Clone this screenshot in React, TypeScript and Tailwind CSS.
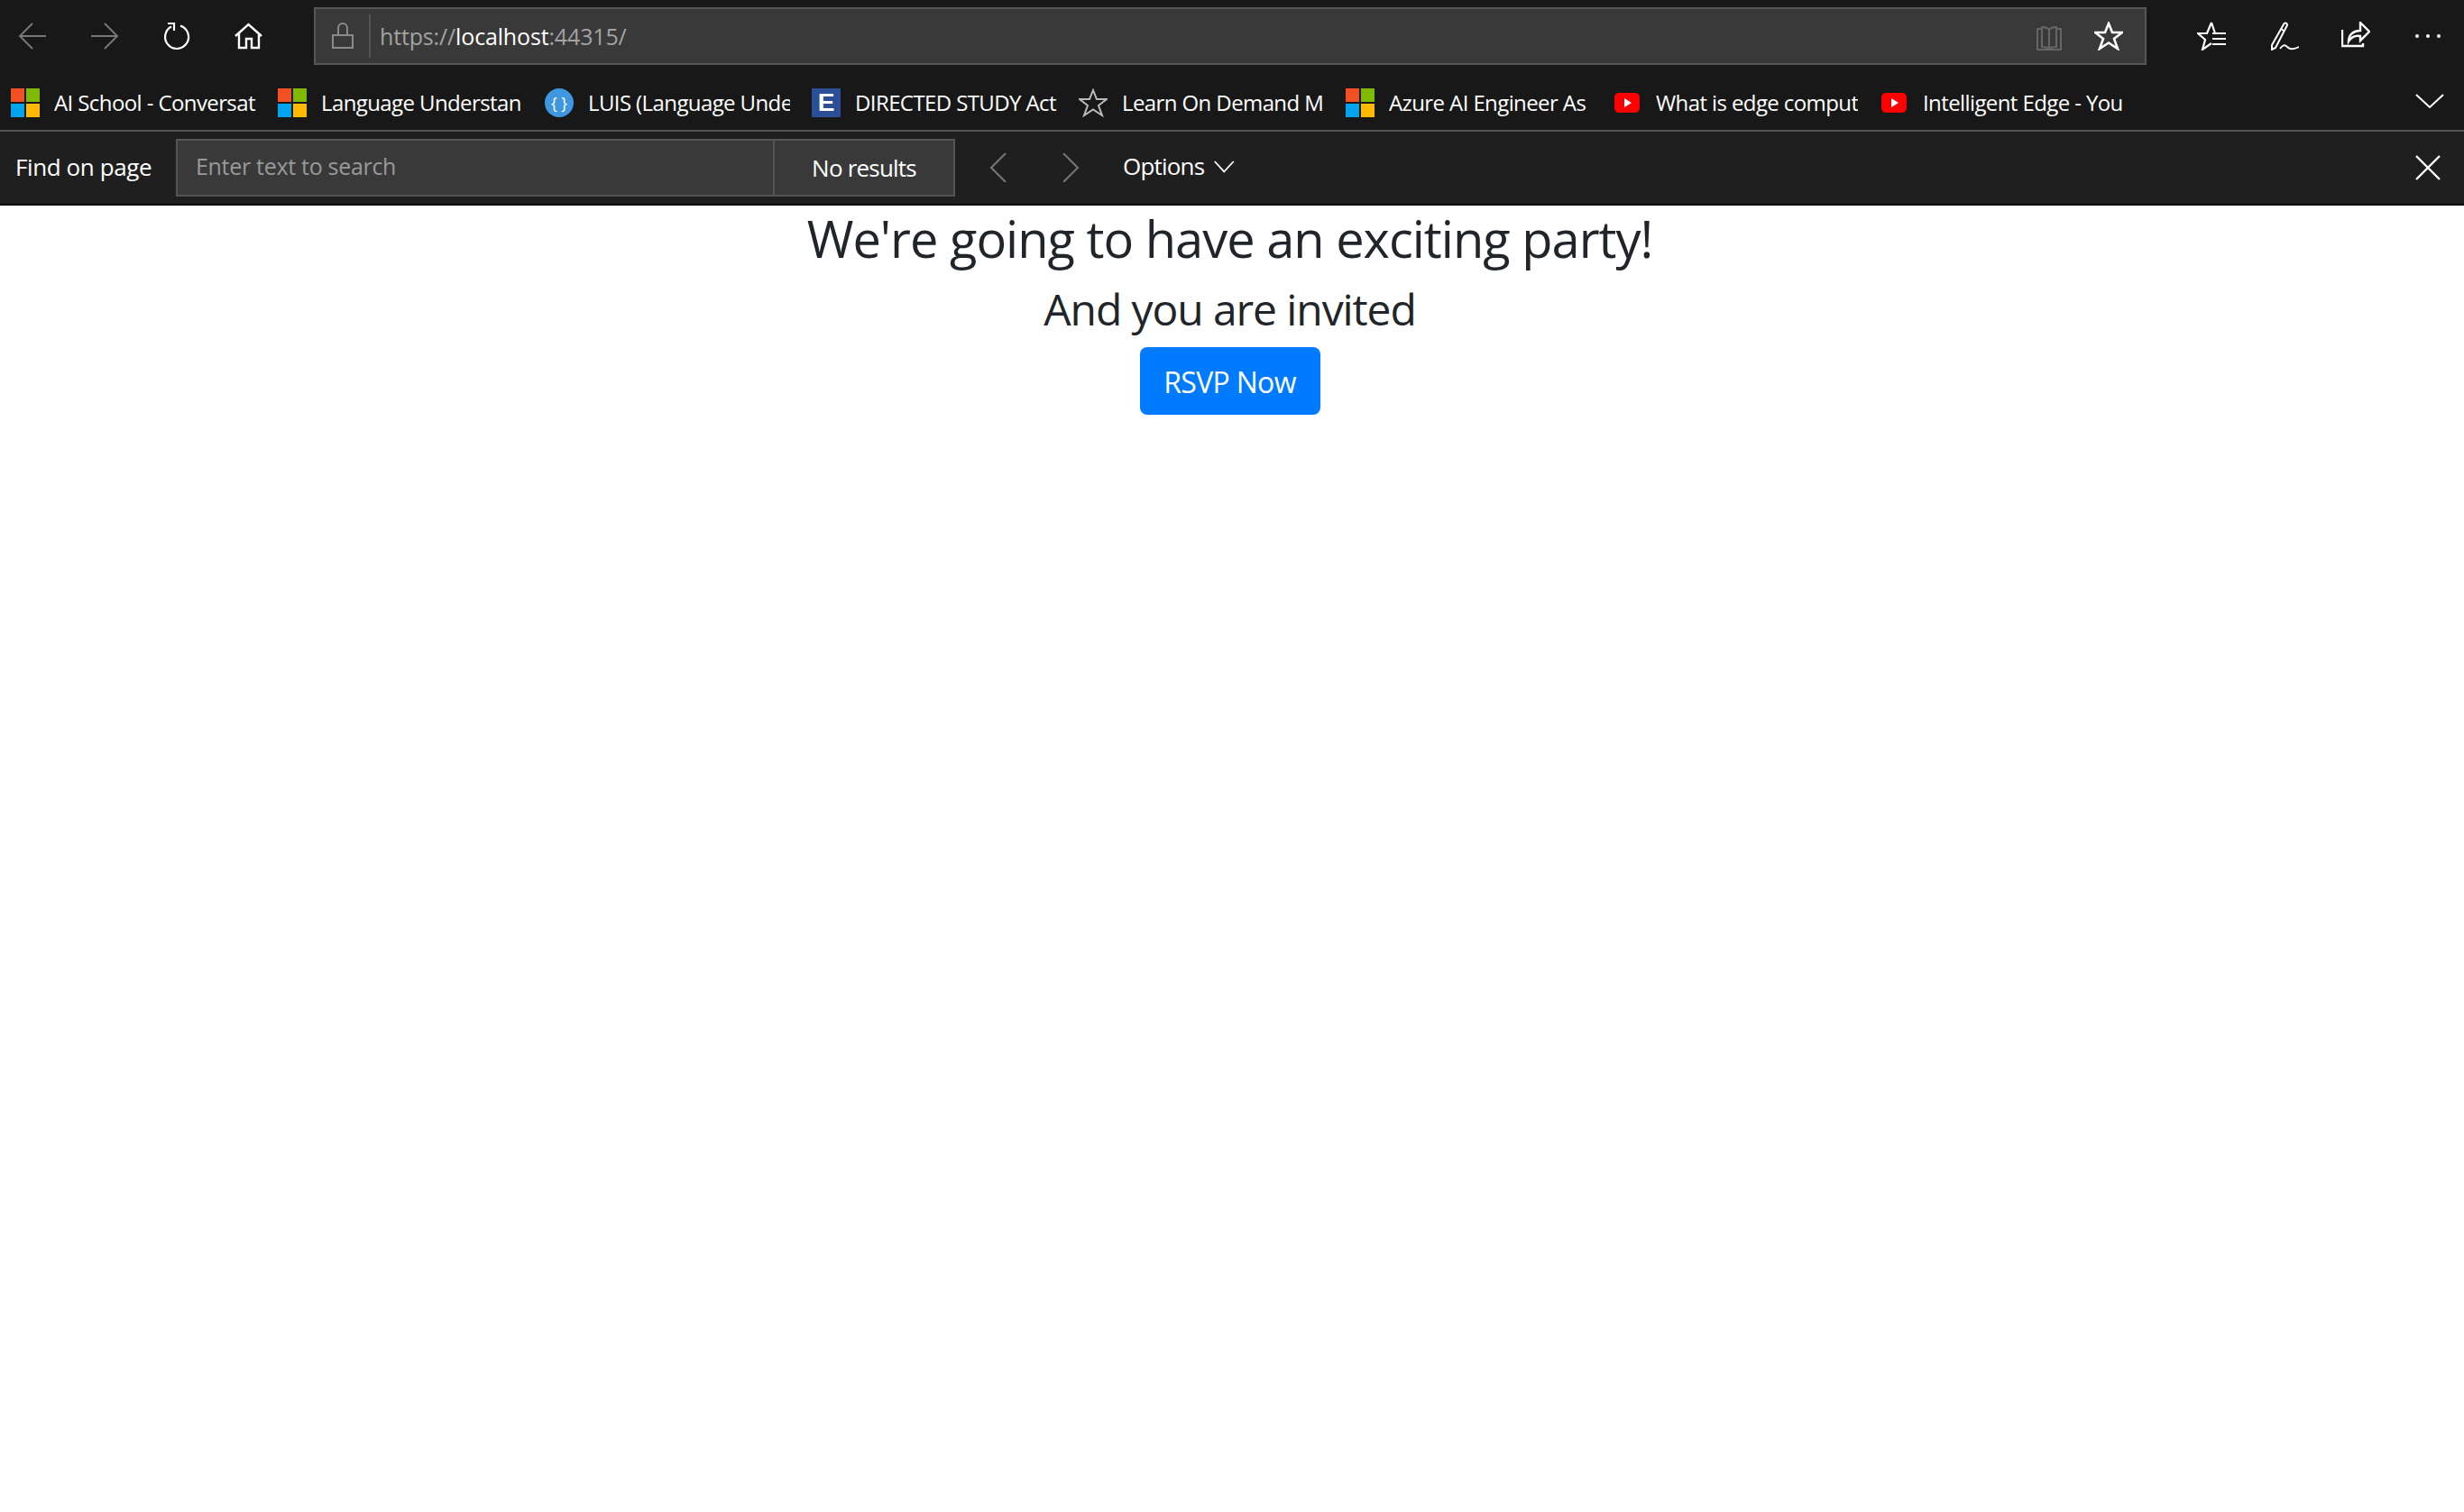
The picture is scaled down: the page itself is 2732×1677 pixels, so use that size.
import type { ReactNode } from "react";

const uiFont = "font-['Open_Sans','Noto_Sans',sans-serif]";

function Stroke({ className, children, width = 2 }: { className: string; children: ReactNode; width?: number }) {
  return (
    <svg viewBox="0 0 32 32" fill="none" stroke="currentColor" strokeWidth={width} className={className}>
      {children}
    </svg>
  );
}

function MsLogo() {
  return (
    <svg viewBox="0 0 32 32" className="w-8 h-8 shrink-0">
      <rect x="0" y="0" width="15" height="15" fill="#f25022" />
      <rect x="17" y="0" width="15" height="15" fill="#7fba00" />
      <rect x="0" y="17" width="15" height="15" fill="#00a4ef" />
      <rect x="17" y="17" width="15" height="15" fill="#ffb900" />
    </svg>
  );
}

function YouTube() {
  return (
    <svg viewBox="0 0 32 32" className="w-8 h-8 shrink-0">
      <rect x="2" y="5" width="28" height="22" rx="5" fill="#f00" />
      <path d="M13 11l8 5-8 5z" fill="#fff" />
    </svg>
  );
}

function StarIcon({ className, width = 2 }: { className: string; width?: number }) {
  return (
    <Stroke className={className} width={width}>
      <path d="M16 2l4 10h11l-9 7 4 11-10-6.500L6 30l4-11-9-7h11z" />
    </Stroke>
  );
}

function Bookmark({ icon, label }: { icon: ReactNode; label: string }) {
  return (
    <div className="w-[296px] shrink-0 flex items-center gap-4">
      {icon}
      <span className="w-[224px] overflow-hidden whitespace-nowrap text-[24px] tracking-[-0.6px] text-white">{label}</span>
    </div>
  );
}

export default function App() {
  return (
    <div className={`min-h-screen bg-white ${uiFont}`}>
      <div className="bg-[#181818]">
        <div className="h-20 flex items-start pt-2">
          <div className="w-[348px] h-16 shrink-0 flex items-center pl-5 text-white">
            <Stroke className="w-8 h-8 text-[#777]">
              <path d="M31 16H2M16 2L2 16l14 14" />
            </Stroke>
            <Stroke className="w-8 h-8 ml-12 text-[#777]">
              <path d="M1 16h29M16 2l14 14-14 14" />
            </Stroke>
            <Stroke className="w-8 h-8 ml-12" width={2.2}>
              <path d="M10 5.500A13 13 0 1 0 20 4.600M6 2h7v8" />
            </Stroke>
            <Stroke className="w-8 h-8 ml-12" width={2.4}>
              <path d="M1 16L15.500 3 30 16M5 13v16h8V19h6v10h8V13" />
            </Stroke>
          </div>
          <div className="w-[2032px] h-16 shrink-0 bg-[#393939] border-2 border-[#555] flex items-center">
            <Stroke className="w-8 h-8 ml-[14px] text-[#8a8a8a]">
              <path d="M5 15h22v14H5zM11 15V7a5 5 0 0 1 10 0v8" />
            </Stroke>
            <div className="w-0.5 h-12 bg-[#555] ml-[13px]" />
            <div className="ml-[10px] mt-[2px] text-[25px] tracking-[-0.15px] text-[#a3a3a3] whitespace-nowrap">
              https://<span className="text-white">localhost</span>:44315/
            </div>
            <Stroke className="w-8 h-8 ml-auto text-[#666]">
              <path d="M8 8H3v23h26V8h-5M8 28V6c3 0 6 0 8 3 2-3 5-3 8-3v22c-3 0-6 0-8 2-2-2-5-2-8-2zM16 9v21" />
            </Stroke>
            <StarIcon className="w-8 h-8 ml-[34px] mr-6 text-white" width={2.6} />
          </div>
          <div className="h-16 flex-1 flex items-center text-white">
            <Stroke className="w-8 h-8 ml-14" width={2.2}>
              <path d="M16 1l4 12M16 1l-5 12H1l8 7-3 11 10-7M17 13h15M17 19h15M17 25h15" />
            </Stroke>
            <Stroke className="w-8 h-8 ml-[49px]">
              <path d="M15 3c1-2 4-2 4 1L6 29l-4 2v-5zM12 8l3 2" />
              <path d="M11 30c3-4 5-5 8-2s6 3 13 0" strokeWidth="1.800" />
            </Stroke>
            <Stroke className="w-8 h-8 ml-[47px]" width={2.4}>
              <path d="M1 9v18h23v-3M21 1l10 10-10 10v-5c-6-1-10 1-13 6 0-8 6-12 13-12z" />
            </Stroke>
            <div className="ml-[50px] flex gap-2">
              <span className="w-1 h-1 rounded-full bg-white" />
              <span className="w-1 h-1 rounded-full bg-white" />
              <span className="w-1 h-1 rounded-full bg-white" />
            </div>
          </div>
        </div>
        <div className="h-16 flex items-start pt-4 pl-3 pr-[22px]">
          <Bookmark icon={<MsLogo />} label="AI School - Conversat" />
          <Bookmark icon={<MsLogo />} label="Language Understan" />
          <Bookmark
            icon={
              <div className="w-8 h-8 shrink-0 rounded-full bg-[#3f97e0] text-white text-[18px] leading-8 text-center">{"{ }"}</div>
            }
            label="LUIS (Language Unde"
          />
          <Bookmark
            icon={
              <div className="w-8 h-8 shrink-0 bg-[#2b4f96] text-white font-bold font-['Liberation_Sans',sans-serif] text-[28px] leading-8 text-center">E</div>
            }
            label="DIRECTED STUDY Act"
          />
          <Bookmark icon={<StarIcon className="w-8 h-8 shrink-0 text-[#bbb]" />} label="Learn On Demand M" />
          <Bookmark icon={<MsLogo />} label="Azure AI Engineer As" />
          <Bookmark icon={<YouTube />} label="What is edge comput" />
          <Bookmark icon={<YouTube />} label="Intelligent Edge - You" />
          <Stroke className="w-8 h-8 ml-auto text-white">
            <path d="M1 9l15 14L31 9" />
          </Stroke>
        </div>
      </div>
      <div className="h-0.5 bg-[#555]" />
      <div className="h-20 bg-[#1f1f1f] flex items-center text-white">
        <div className="w-[195px] shrink-0 pl-[17px] mb-[2px] text-[26px] tracking-[-0.4px] whitespace-nowrap">Find on page</div>
        <div className="w-[864px] h-16 shrink-0 bg-[#393939] border-2 border-[#555] flex items-center">
          <div className="w-[662px] h-full border-r-2 border-[#555] pl-5 pb-[2px] flex items-center text-[25px] tracking-[-0.3px] text-[#999]">
            Enter text to search
          </div>
          <div className="flex-1 text-center text-[26px] tracking-[-0.8px]">No results</div>
        </div>
        <Stroke className="w-8 h-8 ml-8 text-[#777]">
          <path d="M24 0L8 16l16 16" />
        </Stroke>
        <Stroke className="w-8 h-8 ml-12 text-[#777]">
          <path d="M8 0l16 16L8 32" />
        </Stroke>
        <div className="ml-[42px] mb-[3px] text-[26px] tracking-[-0.8px]">Options</div>
        <Stroke className="w-7 h-7 ml-[10px]">
          <path d="M2 8l12 13L26 8" />
        </Stroke>
        <Stroke className="w-8 h-8 ml-auto mr-6" width={2.4}>
          <path d="M3 3l26 26M29 3L3 29" />
        </Stroke>
      </div>
      <div className="h-0.5 bg-black" />
      <div className="flex flex-col items-center pr-[5px] text-[#212529]">
        <h1 className="pt-[3px] text-[56px] leading-[67px] mb-[13px] tracking-[-1px]">We're going to have an exciting party!</h1>
        <h2 className="pt-[3px] text-[48px] leading-[58px] mb-[13px] tracking-[-1.1px]">And you are invited</h2>
        <button className="w-[200px] h-[75px] pt-[2px] rounded-lg bg-[#007bff] text-white text-[32px] tracking-[-0.7px]">RSVP Now</button>
      </div>
    </div>
  );
}
